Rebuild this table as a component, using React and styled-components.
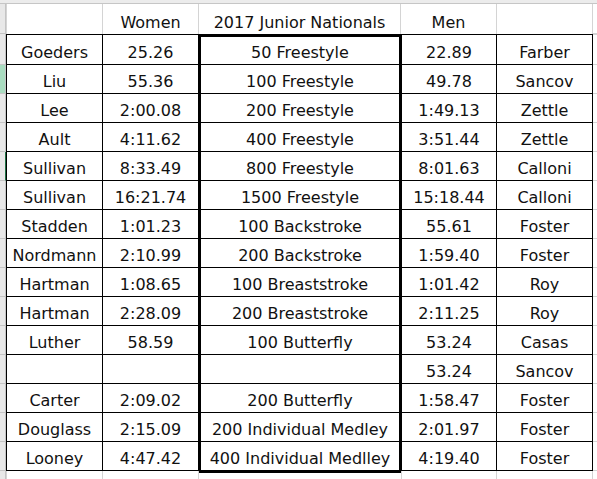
import styled, { createGlobalStyle } from 'styled-components';

const GlobalStyle = createGlobalStyle`
  html, body {
    margin: 0;
    background: #ffffff;
  }
  body {
    font-family: 'DejaVu Sans', Verdana, sans-serif;
    font-size: 16px;
    color: #111111;
  }
`;

const GRID = '#d4d4d4';
const INK = '#000000';

const results = [
  ['Goeders', '25.26', '50 Freestyle', '22.89', 'Farber'],
  ['Liu', '55.36', '100 Freestyle', '49.78', 'Sancov'],
  ['Lee', '2:00.08', '200 Freestyle', '1:49.13', 'Zettle'],
  ['Ault', '4:11.62', '400 Freestyle', '3:51.44', 'Zettle'],
  ['Sullivan', '8:33.49', '800 Freestyle', '8:01.63', 'Calloni'],
  ['Sullivan', '16:21.74', '1500 Freestyle', '15:18.44', 'Calloni'],
  ['Stadden', '1:01.23', '100 Backstroke', '55.61', 'Foster'],
  ['Nordmann', '2:10.99', '200 Backstroke', '1:59.40', 'Foster'],
  ['Hartman', '1:08.65', '100 Breaststroke', '1:01.42', 'Roy'],
  ['Hartman', '2:28.09', '200 Breaststroke', '2:11.25', 'Roy'],
  ['Luther', '58.59', '100 Butterfly', '53.24', 'Casas'],
  ['', '', '', '53.24', 'Sancov'],
  ['Carter', '2:09.02', '200 Butterfly', '1:58.47', 'Foster'],
  ['Douglass', '2:15.09', '200 Individual Medley', '2:01.97', 'Foster'],
  ['Looney', '4:47.42', '400 Individual Medlley', '4:19.40', 'Foster'],
];

export default function App() {
  const last = results.length - 1;
  return (
    <>
      <GlobalStyle />
      <Sheet>
        <ColumnHeads />

        <Row $h={30}>
          <RowHead />
          <HeadCell $w={97} $left>&nbsp;</HeadCell>
          <HeadCell $w={95} $noRight>Women</HeadCell>
          <HeadCell $w={203} $left>2017 Junior Nationals</HeadCell>
          <HeadCell $w={96}>Men</HeadCell>
          <HeadCell $w={96} />
          <Filler />
        </Row>

        {results.map((r, i) => {
          const first = i === 0;
          const end = i === last;
          const h = first ? 31 : 29;
          return (
            <Row key={i} $h={h}>
              <RowHead $tone={i === 1 ? 'pick' : i === 4 ? 'edge' : 'plain'} />
              <Cell $w={97} $h={h} $top={first} $left>{r[0]}</Cell>
              <Cell $w={95} $h={h} $top={first} $noRight>{r[1]}</Cell>
              <EventCell $h={end ? h + 2 : h} $top={first} $end={end}>{r[2]}</EventCell>
              <Cell $w={95} $h={h} $top={first}>{r[3]}</Cell>
              <Cell $w={96} $h={h} $top={first}>{r[4]}</Cell>
              <Filler $top={first} />
            </Row>
          );
        })}

        <Row $h={9}>
          <RowHead />
          <BlankCell $w={97} $left />
          <BlankCell $w={95} $noRight />
          <BlankCell $w={204} $left />
          <BlankCell $w={95} />
          <BlankCell $w={96} />
          <Filler />
        </Row>
      </Sheet>
    </>
  );
}

const Sheet = styled.div`
  width: 597px;
  height: 479px;
  overflow: hidden;
  display: flex;
  flex-direction: column;
`;

const ColumnHeads = styled.div`
  flex: none;
  height: 4px;
  box-sizing: border-box;
  background: #ececec;
  border-bottom: 1px solid #c6c6c6;
`;

const Row = styled.div`
  flex: none;
  height: ${p => p.$h}px;
  display: flex;
  align-items: flex-start;
`;

const RowHead = styled.div`
  flex: none;
  width: 6px;
  height: 100%;
  box-sizing: border-box;
  background: ${p => (p.$tone === 'pick' ? '#a9dcc0' : '#e8e8e8')};
  border-bottom: 1px solid #c4c4c4;
  border-right: 1px solid ${p => (p.$tone === 'edge' ? '#217346' : '#c4c4c4')};
`;

const Cell = styled.div`
  flex: none;
  box-sizing: border-box;
  width: ${p => p.$w}px;
  height: ${p => p.$h}px;
  display: flex;
  align-items: flex-end;
  justify-content: center;
  padding-bottom: 2px;
  line-height: 19px;
  white-space: nowrap;
  border-left: ${p => (p.$left ? `1px solid ${INK}` : 'none')};
  border-right: ${p => (p.$noRight ? 'none' : `1px solid ${INK}`)};
  border-top: ${p => (p.$top ? `1px solid ${INK}` : 'none')};
  border-bottom: 1px solid ${INK};
`;

const EventCell = styled(Cell)`
  width: 204px;
  border-left: 3px solid ${INK};
  border-right: 3px solid ${INK};
  border-top: ${p => (p.$top ? `3px solid ${INK}` : 'none')};
  border-bottom: ${p => (p.$end ? 3 : 1)}px solid ${INK};
`;

const HeadCell = styled(Cell)`
  height: 100%;
  border-left: ${p => (p.$left ? `1px solid ${GRID}` : 'none')};
  border-right: ${p => (p.$noRight ? 'none' : `1px solid ${GRID}`)};
  border-bottom: none;
`;

const BlankCell = styled.div`
  flex: none;
  box-sizing: border-box;
  width: ${p => p.$w}px;
  height: 100%;
  border-left: ${p => (p.$left ? `1px solid ${GRID}` : 'none')};
  border-right: ${p => (p.$noRight ? 'none' : `1px solid ${GRID}`)};
`;

const Filler = styled.div`
  flex: 1;
  height: 100%;
  box-sizing: border-box;
  border-top: ${p => (p.$top ? `1px solid ${GRID}` : 'none')};
  border-bottom: 1px solid ${GRID};
`;
